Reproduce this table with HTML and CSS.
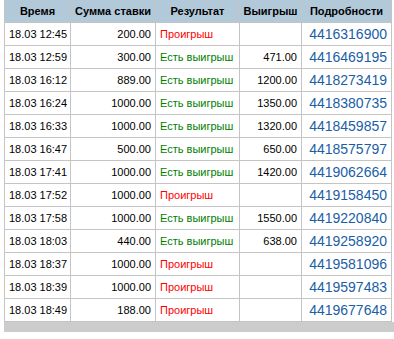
FILE: index.html
```html
<!DOCTYPE html>
<html>
<head>
<meta charset="utf-8">
<link rel="stylesheet" href="styles.css">
</head>
<body>
<div class="wrap">
<table class="bets">
<colgroup>
<col class="c-time"><col class="c-sum"><col class="c-res"><col class="c-win"><col class="c-det">
</colgroup>
<thead>
<tr><th>Время</th><th>Сумма ставки</th><th>Результат</th><th>Выигрыш</th><th>Подробности</th></tr>
</thead>
<tbody>
<tr><td>18.03 12:45</td><td class="num">200.00</td><td class="lose">Проигрыш</td><td class="num"></td><td class="det"><a href="#">4416316900</a></td></tr>
<tr><td>18.03 12:59</td><td class="num">300.00</td><td class="win">Есть выигрыш</td><td class="num">471.00</td><td class="det"><a href="#">4416469195</a></td></tr>
<tr><td>18.03 16:12</td><td class="num">889.00</td><td class="win">Есть выигрыш</td><td class="num">1200.00</td><td class="det"><a href="#">4418273419</a></td></tr>
<tr><td>18.03 16:24</td><td class="num">1000.00</td><td class="win">Есть выигрыш</td><td class="num">1350.00</td><td class="det"><a href="#">4418380735</a></td></tr>
<tr><td>18.03 16:33</td><td class="num">1000.00</td><td class="win">Есть выигрыш</td><td class="num">1320.00</td><td class="det"><a href="#">4418459857</a></td></tr>
<tr><td>18.03 16:47</td><td class="num">500.00</td><td class="win">Есть выигрыш</td><td class="num">650.00</td><td class="det"><a href="#">4418575797</a></td></tr>
<tr><td>18.03 17:41</td><td class="num">1000.00</td><td class="win">Есть выигрыш</td><td class="num">1420.00</td><td class="det"><a href="#">4419062664</a></td></tr>
<tr><td>18.03 17:52</td><td class="num">1000.00</td><td class="lose">Проигрыш</td><td class="num"></td><td class="det"><a href="#">4419158450</a></td></tr>
<tr><td>18.03 17:58</td><td class="num">1000.00</td><td class="win">Есть выигрыш</td><td class="num">1550.00</td><td class="det"><a href="#">4419220840</a></td></tr>
<tr><td>18.03 18:03</td><td class="num">440.00</td><td class="win">Есть выигрыш</td><td class="num">638.00</td><td class="det"><a href="#">4419258920</a></td></tr>
<tr><td>18.03 18:37</td><td class="num">1000.00</td><td class="lose">Проигрыш</td><td class="num"></td><td class="det"><a href="#">4419581096</a></td></tr>
<tr><td>18.03 18:39</td><td class="num">1000.00</td><td class="lose">Проигрыш</td><td class="num"></td><td class="det"><a href="#">4419597483</a></td></tr>
<tr><td>18.03 18:49</td><td class="num">188.00</td><td class="lose">Проигрыш</td><td class="num"></td><td class="det"><a href="#">4419677648</a></td></tr>
</tbody>
</table>
<div class="footer-bar"></div>
</div>
</body>
</html>
```
FILE: styles.css
```css
html, body {
  margin: 0;
  padding: 0;
  background: #ffffff;
}
.wrap {
  padding-left: 4px;
  font-family: "Liberation Sans", Arial, sans-serif;
}
.bets {
  border-collapse: collapse;
  table-layout: fixed;
  width: 387px;
}
.c-time { width: 66px; }
.c-sum { width: 85px; }
.c-res { width: 84px; }
.c-win { width: 62px; }
.c-det { width: 90px; }
.bets th {
  background: #b2c9da;
  color: #000;
  font-weight: bold;
  font-size: 11px;
  height: 22px;
  padding: 0;
  text-align: center;
  border: 1px solid #c4c4c4;
  border-top: none;
  white-space: nowrap;
}
.bets td {
  height: 22px;
  padding: 0 4px;
  font-size: 11px;
  color: #000;
  border: 1px solid #c4c4c4;
  white-space: nowrap;
  vertical-align: middle;
}
.bets td.num { text-align: right; }
.bets td.lose { color: #ff0000; }
.bets td.win { color: #008000; }
.bets td.det { text-align: right; padding-right: 4px; }
.bets td.det a {
  color: #1a5ea6;
  text-decoration: none;
  font-size: 14px;
}
.footer-bar {
  height: 10px;
  background: #cccccc;
}
```
